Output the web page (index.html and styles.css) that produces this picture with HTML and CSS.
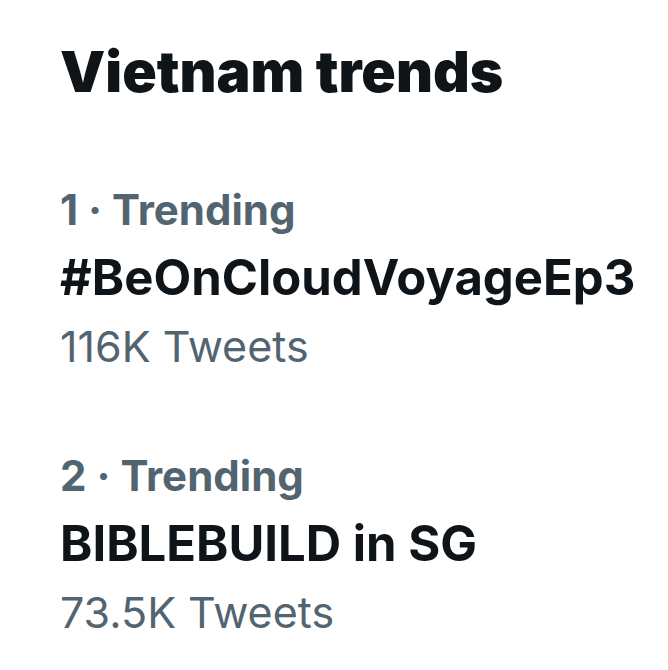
FILE: index.html
```html
<!DOCTYPE html>
<html lang="en">
<head>
    <meta charset="UTF-8">
    <meta name="viewport" content="width=device-width, initial-scale=1.0">
    <title>Vietnam trends</title>
    <link rel="stylesheet" href="styles.css">
</head>
<body>
    <section class="trends">
        <h1 class="trends-title">Vietnam trends</h1>

        <!-- Trend 1 -->
        <div class="trend">
            <div class="trend-meta">1 · Trending</div>
            <div class="trend-name">#BeOnCloudVoyageEp3</div>
            <div class="trend-count">116K Tweets</div>
        </div>

        <!-- Trend 2 -->
        <div class="trend">
            <div class="trend-meta">2 · Trending</div>
            <div class="trend-name">BIBLEBUILD in SG</div>
            <div class="trend-count">73.5K Tweets</div>
        </div>
    </section>
</body>
</html>
```

FILE: styles.css
```css
body {
    margin: 0;
    background-color: #ffffff;
    font-family: Inter, "Noto Sans", sans-serif;
    color: #0f1419;
}
.trends {
    padding: 36px 0 0 60px;
}
.trends-title {
    margin: 0 0 68px 0;
    font-size: 57px;
    line-height: 72px;
    font-weight: 900;
}
.trend + .trend {
    margin-top: 62px;
}
.trend-meta,
.trend-name,
.trend-count {
    line-height: 68px;
}
.trend-meta {
    color: #536471;
    font-size: 42px;
    font-weight: 700;
}
.trend-name {
    font-size: 49px;
    font-weight: 700;
}
.trend-count {
    color: #536471;
    font-size: 43px;
    font-weight: 400;
}
```
